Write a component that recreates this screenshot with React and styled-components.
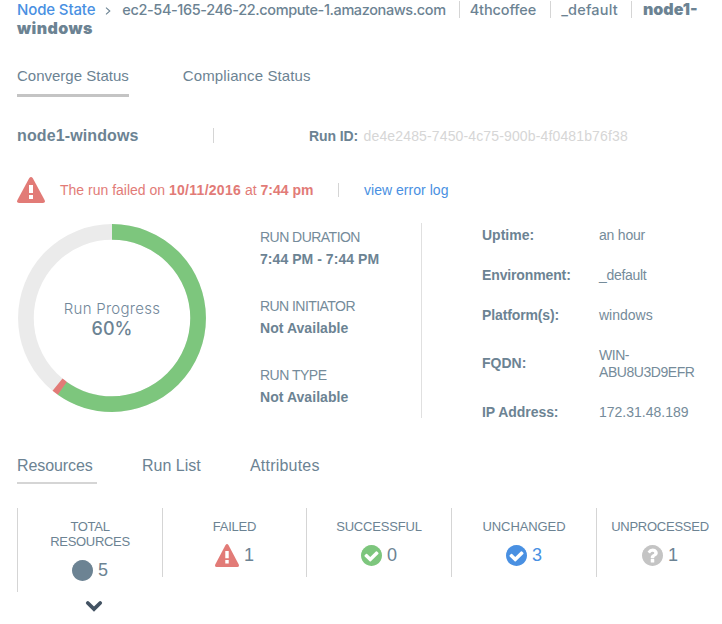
import React from 'react';
import styled, { createGlobalStyle } from 'styled-components';

const slate = '#6c8393';
const red = '#e27b77';
const green = '#7dc67d';
const blue = '#4990e2';
const rule = '#d5d5d5';

const GlobalStyle = createGlobalStyle`
  * { box-sizing: border-box; }
  body {
    margin: 0;
    background: #fff;
    color: ${slate};
    font-family: "Liberation Sans", Arial, sans-serif;
    font-size: 14px;
    overflow: hidden;
  }
`;

const Page = styled.main`
  width: 722px;
  height: 624px;
  overflow: hidden;
`;

const Breadcrumb = styled.nav`
  height: 57px;
  padding: 0 15px 0 17px;
  font: 500 14.5px/19px Inter, sans-serif;
`;
const Crumb = styled.span`
  letter-spacing: ${(p) => p.$track || 0}px;
`;
const CrumbLink = styled.a`
  color: ${blue};
  font-size: 15px;
  letter-spacing: -0.13px;
`;
const CrumbArrow = styled.svg`
  width: 6px;
  height: 8px;
  margin: 0 11px 0 10px;
`;
const CrumbRule = styled.span`
  display: inline-block;
  width: 1px;
  height: 17px;
  margin: 0 ${(p) => p.$after}px 0 ${(p) => p.$before}px;
  vertical-align: -3px;
  background: ${rule};
`;
const CrumbCurrent = styled.strong`
  font-size: 16px;
  font-weight: 900;
  line-height: 18px;
  letter-spacing: ${(p) => p.$track || 0}px;
`;

const StatusTabs = styled.div`
  display: flex;
  gap: 54px;
  height: 58px;
  padding-left: 17px;
  font-size: 15px;
`;
const StatusTab = styled.button`
  height: 40px;
  padding: 0;
  border: 0;
  border-bottom: 3px solid ${(p) => (p.$active ? '#c4c4c4' : 'transparent')};
  background: none;
  color: inherit;
  font: inherit;
  line-height: 37px;
  letter-spacing: ${(p) => p.$track || 0}px;
`;

const NodeRow = styled.section`
  display: flex;
  align-items: center;
  height: 41px;
  padding-left: 17px;
`;
const NodeName = styled.h1`
  width: 196px;
  margin: 0;
  font-size: 16px;
  line-height: 20px;
  letter-spacing: 0.12px;
`;
const Divider = styled.i`
  flex: none;
  width: 1px;
  height: ${(p) => p.$height}px;
  background: ${rule};
`;
const RunLabel = styled.strong`
  margin-left: 95px;
  letter-spacing: -0.1px;
`;
const RunId = styled.span`
  margin-left: 5.5px;
  color: #d6d6d6;
  letter-spacing: 0.14px;
`;

const AlertRow = styled.section`
  display: flex;
  align-items: center;
  height: 67px;
  padding: 1px 0 0 17px;
  color: ${red};
`;
const AlertText = styled.p`
  width: 278px;
  margin: 0 0 0 15px;
  white-space: nowrap;
`;
const AlertDate = styled.strong`
  letter-spacing: 0.28px;
`;
const ErrorLink = styled.a`
  margin-left: 25px;
  color: ${blue};
  letter-spacing: 0.03px;
`;

const Overview = styled.section`
  display: flex;
  height: 217px;
`;
const Progress = styled.div`
  display: grid;
  place-items: center;
  width: 188px;
  height: 188px;
  margin: 1px 0 0 18px;
  & > * { grid-area: 1 / 1; }
`;
const Ring = styled.svg`
  width: 188px;
  height: 188px;
`;
const ProgressText = styled.div`
  padding-top: 1px;
  color: #71879a;
  text-align: center;
  font: 300 15px/20px Inter, sans-serif;
  letter-spacing: 0.28px;
`;
const ProgressValue = styled.div`
  color: ${slate};
  font-size: 18px;
  font-weight: 500;
  line-height: 20px;
  letter-spacing: 0;
`;

const RunFacts = styled.dl`
  width: 162px;
  height: 195px;
  margin: 0 0 0 54px;
  padding-top: 3px;
  border-right: 1px solid #e0e0e0;
  line-height: 22px;
`;
const FactName = styled.dt`
  color: #758b9a;
  letter-spacing: ${(p) => p.$track}px;
`;
const FactValue = styled.dd`
  margin: 0 0 25px;
  font-weight: 700;
  letter-spacing: 0.05px;
`;

const Details = styled.dl`
  display: grid;
  grid-template-columns: 117px 110px;
  grid-template-rows: 40px 40px 40px 57px 40px;
  align-items: center;
  margin: -8px 0 0 60px;
  line-height: 17px;
`;
const DetailName = styled.dt`
  font-weight: 700;
  letter-spacing: ${(p) => p.$track || 0}px;
`;
const DetailValue = styled.dd`
  margin: 0;
  color: #758b9a;
  letter-spacing: ${(p) => p.$track || 0}px;
`;

const ResourceTabs = styled.div`
  display: flex;
  height: 68px;
  padding-left: 17px;
  font-size: 16px;
`;
const ResourceTab = styled.button`
  width: ${(p) => p.$width}px;
  height: 44px;
  margin-right: ${(p) => p.$gap || 0}px;
  padding: 9px 0 0;
  border: 0;
  border-bottom: 2px solid ${(p) => (p.$active ? '#d5d5d5' : 'transparent')};
  background: none;
  color: inherit;
  font: inherit;
  line-height: 33px;
  letter-spacing: ${(p) => p.$track || 0}px;
  text-align: left;
  white-space: nowrap;
`;

const Summary = styled.section`
  display: grid;
  grid-template-columns: 145px 144px 145px 145px 127px;
  align-items: start;
  margin-left: 17px;
`;
const SummaryCell = styled.div`
  display: flex;
  flex-direction: column;
  align-items: center;
  height: ${(p) => (p.$tall ? 84 : 69)}px;
  padding-top: 11px;
  border-left: 1px solid ${rule};
`;
const SummaryLabel = styled.span`
  max-width: 110px;
  font-size: 13px;
  line-height: 15px;
  text-align: center;
  letter-spacing: ${(p) => p.$track}px;
`;
const Count = styled.span`
  display: flex;
  align-items: center;
  gap: 5px;
  height: 22px;
  margin-top: 10px;
  color: ${(p) => p.$color || slate};
  font-size: 18px;
  line-height: 22px;
`;
const Icon = styled.svg`
  flex: none;
  width: ${(p) => p.$w}px;
  height: ${(p) => p.$h}px;
`;
const Expand = styled.button`
  display: block;
  width: 18px;
  height: 12px;
  margin: 8px 0 0 85px;
  padding: 0;
  border: 0;
  background: none;
`;
const ExpandIcon = styled.svg`
  display: block;
`;

const Warning = ({ w, h }) => (
  <Icon $w={w} $h={h} viewBox="0 0 28 26" preserveAspectRatio="none">
    <path
      fill={red}
      d="M12.3 1Q14-.9 15.7 1L27.7 23.3Q28.6 26 26 26H2Q-.6 26 .3 23.3Z"
    />
    <path fill="#fff" d="M12 8h4v8h-4zM12 18h4v4h-4z" />
  </Icon>
);

const disc =
  'M1664 896q0 209-103 385.5t-279.5 279.5-385.5 103-385.5-103-279.5-279.5-103-385.5 103-385.5 279.5-279.5 385.5-103 385.5 103 279.5 279.5 103 385.5z';
const check =
  'M1412 734q0-28-18-46l-91-90q-19-19-45-19t-45 19l-408 407-226-226q-19-19-45-19t-45 19l-91 90q-18 18-18 46 0 27 18 45l362 362q19 19 45 19 27 0 46-19l543-543q18-18 18-45z';
const question =
  'M1024 1376v-192q0-14-9-23t-23-9h-192q-14 0-23 9t-9 23v192q0 14 9 23t23 9h192q14 0 23-9t9-23zm256-672q0-88-55.5-163t-138.5-116-170-41q-243 0-371 213-15 24 8 42l132 100q7 6 19 6 16 0 25-12 53-68 86-92 34-24 86-24 48 0 85.5 26t37.5 59q0 38-20 61t-68 45q-63 28-115.5 86.5t-52.5 125.5v36q0 14 9 23t23 9h192q14 0 23-9t9-23q0-19 21.5-49.5t54.5-49.5q32-18 49-28.5t46-35 44.5-48 28-60.5 12.5-81z';

const Disc = ({ color, mark }) => (
  <Icon $w={21} $h={21} viewBox="128 128 1536 1536">
    <path d={disc} fill={color} />
    {mark && <path d={mark} fill="#fff" />}
  </Icon>
);

const facts = [
  ['RUN DURATION', '7:44 PM - 7:44 PM', -0.53],
  ['RUN INITIATOR', 'Not Available', -0.55],
  ['RUN TYPE', 'Not Available', -0.5],
];

const details = [
  ['Uptime:', 'an hour', 0, -0.2],
  ['Environment:', '_default', -0.13, -0.3],
  ['Platform(s):', 'windows', -0.12, 0],
  ['FQDN:', 'WIN-ABU8U3D9EFR', 0, -0.45],
  ['IP Address:', '172.31.48.189', -0.05, 0],
];

const cells = [
  { label: 'TOTAL RESOURCES', count: 5, icon: <Disc color={slate} />, track: -0.3, tall: true },
  { label: 'FAILED', count: 1, icon: <Warning w={24} h={23} />, track: -0.2 },
  { label: 'SUCCESSFUL', count: 0, icon: <Disc color={green} mark={check} />, track: -0.17 },
  { label: 'UNCHANGED', count: 3, icon: <Disc color={blue} mark={check} />, track: -0.1, color: blue },
  { label: 'UNPROCESSED', count: 1, icon: <Disc color="#c4c4c4" mark={question} />, track: -0.25 },
];

export default function App() {
  return (
    <Page>
      <GlobalStyle />
      <Breadcrumb>
        <CrumbLink>Node State</CrumbLink>
        <CrumbArrow viewBox="0 0 6 8">
          <path d="M1 .7 4.8 4 1 7.3" fill="none" stroke={slate} strokeWidth="1.1" />
        </CrumbArrow>
        <Crumb $track={-0.39}>ec2-54-165-246-22.compute-1.amazonaws.com</Crumb>
        <CrumbRule $before={13} $after={10} />
        <Crumb $track={-0.1}>4thcoffee</Crumb>
        <CrumbRule $before={14} $after={10} />
        <Crumb $track={0.2}>_default</Crumb>
        <CrumbRule $before={13} $after={11} />
        <CrumbCurrent>node1-</CrumbCurrent>
        <wbr />
        <CrumbCurrent $track={0.45}>windows</CrumbCurrent>
      </Breadcrumb>

      <StatusTabs>
        <StatusTab $active>Converge Status</StatusTab>
        <StatusTab $track={0.12}>Compliance Status</StatusTab>
      </StatusTabs>

      <NodeRow>
        <NodeName>node1-windows</NodeName>
        <Divider $height={15} />
        <RunLabel>Run ID:</RunLabel>
        <RunId>de4e2485-7450-4c75-900b-4f0481b76f38</RunId>
      </NodeRow>

      <AlertRow>
        <Warning w={28} h={26} />
        <AlertText>
          The run failed on <AlertDate>10/11/2016</AlertDate> at <strong>7:44 pm</strong>
        </AlertText>
        <Divider $height={14} />
        <ErrorLink>view error log</ErrorLink>
      </AlertRow>

      <Overview>
        <Progress>
          <Ring viewBox="0 0 188 188">
            <g transform="rotate(-90 94 94)" fill="none" strokeWidth="15.7">
              <circle cx="94" cy="94" r="86.1" stroke="#ebebeb" />
              <circle
                cx="94"
                cy="94"
                r="86.1"
                stroke={red}
                pathLength="100"
                strokeDasharray="1.2 98.8"
                strokeDashoffset="-59.7"
              />
              <circle cx="94" cy="94" r="86.1" stroke={green} pathLength="100" strokeDasharray="59.8 100" />
            </g>
          </Ring>
          <ProgressText>
            Run Progress
            <ProgressValue>60%</ProgressValue>
          </ProgressText>
        </Progress>
        <RunFacts>
          {facts.map(([name, value, track]) => (
            <React.Fragment key={name}>
              <FactName $track={track}>{name}</FactName>
              <FactValue>{value}</FactValue>
            </React.Fragment>
          ))}
        </RunFacts>
        <Details>
          {details.map(([name, value, nameTrack, valueTrack]) => (
            <React.Fragment key={name}>
              <DetailName $track={nameTrack}>{name}</DetailName>
              <DetailValue $track={valueTrack}>{value}</DetailValue>
            </React.Fragment>
          ))}
        </Details>
      </Overview>

      <ResourceTabs>
        <ResourceTab $active $width={80} $gap={45} $track={-0.08}>Resources</ResourceTab>
        <ResourceTab $width={60} $gap={48}>Run List</ResourceTab>
        <ResourceTab $width={72} $track={0.2}>Attributes</ResourceTab>
      </ResourceTabs>

      <Summary>
        {cells.map((cell) => (
          <SummaryCell key={cell.label} $tall={cell.tall}>
            <SummaryLabel $track={cell.track}>{cell.label}</SummaryLabel>
            <Count $color={cell.color}>
              {cell.icon}
              {cell.count}
            </Count>
          </SummaryCell>
        ))}
      </Summary>
      <Expand aria-label="Expand">
        <ExpandIcon width="18" height="12" viewBox="0 0 18 12">
          <path d="M2.8 3 9 9 15.2 3" fill="none" stroke="#435363" strokeWidth="3.8" strokeLinecap="round" />
        </ExpandIcon>
      </Expand>
    </Page>
  );
}
